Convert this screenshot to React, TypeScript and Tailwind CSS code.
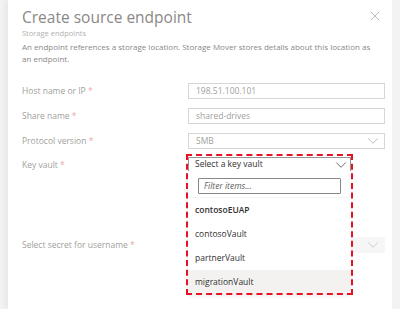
import { ChevronDown, X } from 'lucide-react'

const font = { fontFamily: '"Open Sans", "Noto Sans", sans-serif' }

function Label({ text }: { text: string }) {
  return (
    <div className="text-[8.5px] leading-[12px] text-[#a19f9d]">
      {text} <span className="text-[#eba7a7]">*</span>
    </div>
  )
}

function Field({ label, value, select }: { label: string; value: string; select?: boolean }) {
  return (
    <div className="grid grid-cols-[166px_197px] items-center h-[16px]">
      <Label text={label} />
      <div className="h-[16px] border border-[#d8d6d4] flex items-center justify-between pl-[7px] pr-[2px] text-[8.5px] text-[#a19f9d]">
        <span>{value}</span>
        {select && <ChevronDown className="w-[18px] h-[18px] text-[#b8b6b4]" strokeWidth={1.2} />}
      </div>
    </div>
  )
}

const vaults = ['contosoVault', 'partnerVault', 'migrationVault']

export default function App() {
  return (
    <div className="w-[400px] h-[309px] bg-[#f3f3f3] px-[8px] overflow-hidden" style={font}>
      <div className="h-full bg-white shadow-[-3px_0_6px_rgba(0,0,0,0.05)] pl-[14px] pr-[9px]">
        <div className="flex items-start justify-between pt-[7px]">
          <h1 className="text-[15.5px] leading-[20px] text-[#8a8886]">Create source endpoint</h1>
          <X className="w-[16px] h-[16px] mt-[1px] text-[#b3b0ad]" strokeWidth={1.3} />
        </div>
        <div className="mt-[1px] text-[7.5px] leading-[10px] text-[#b3b0ad]">Storage endpoints</div>
        <p className="mt-[3px] text-[8px] leading-[11.5px] text-[#8a8886] w-[358px]">
          An endpoint references a storage location. Storage Mover stores details about this location as an endpoint.
        </p>

        <div className="mt-[19px] flex flex-col gap-[9px]">
          <Field label="Host name or IP" value="198.51.100.101" />
          <Field label="Share name" value="shared-drives" />
          <Field label="Protocol version" value="SMB" select />

          <div className="grid grid-cols-[166px_197px] items-start h-[16px] -mt-[1px]">
            <div className="pt-[2px]"><Label text="Key vault" /></div>
            <div className="relative w-[163px]">
              <div className="h-[15px] border border-[#979593] bg-white flex items-center justify-between pl-[6px] text-[8.5px] text-[#323130]">
                <span>Select a key vault</span>
                <ChevronDown className="w-[18px] h-[18px] text-[#605e5c]" strokeWidth={1.2} />
              </div>
              <div className="absolute left-0 top-[14px] w-[163px] z-10 bg-white shadow-[0_2px_4px_rgba(0,0,0,0.08)]">
                <div className="h-[27px] pt-[7px] px-[10px] border-b border-[#f3f3f3]">
                  <div className="h-[16px] border border-[#8a8886] rounded-[1px] flex items-center pl-[5px] text-[8.5px] italic text-[#605e5c]">
                    Filter items...
                  </div>
                </div>
                <div className="h-[24px] flex items-center pl-[7px] text-[8.5px] font-semibold text-[#323130]">contosoEUAP</div>
                {vaults.map((v) => (
                  <div
                    key={v}
                    className={`h-[24px] flex items-center pl-[7px] text-[8.5px] text-[#323130] ${v === 'migrationVault' ? 'bg-[#f3f2f1]' : ''}`}
                  >
                    {v}
                  </div>
                ))}
              </div>
              <div className="absolute -left-[2px] -top-[3px] w-[167px] h-[141px] border-2 border-dashed border-[#e81123] z-20 pointer-events-none" />
            </div>
          </div>

          <div className="grid grid-cols-[166px_197px] items-center h-[16px] mt-[55px]">
            <Label text="Select secret for username" />
            <div className="h-[16px] bg-[#f6f6f6] flex items-center justify-end pr-[3px]">
              <ChevronDown className="w-[18px] h-[18px] text-[#c8c6c4]" strokeWidth={1.2} />
            </div>
          </div>
        </div>
      </div>
    </div>
  )
}
